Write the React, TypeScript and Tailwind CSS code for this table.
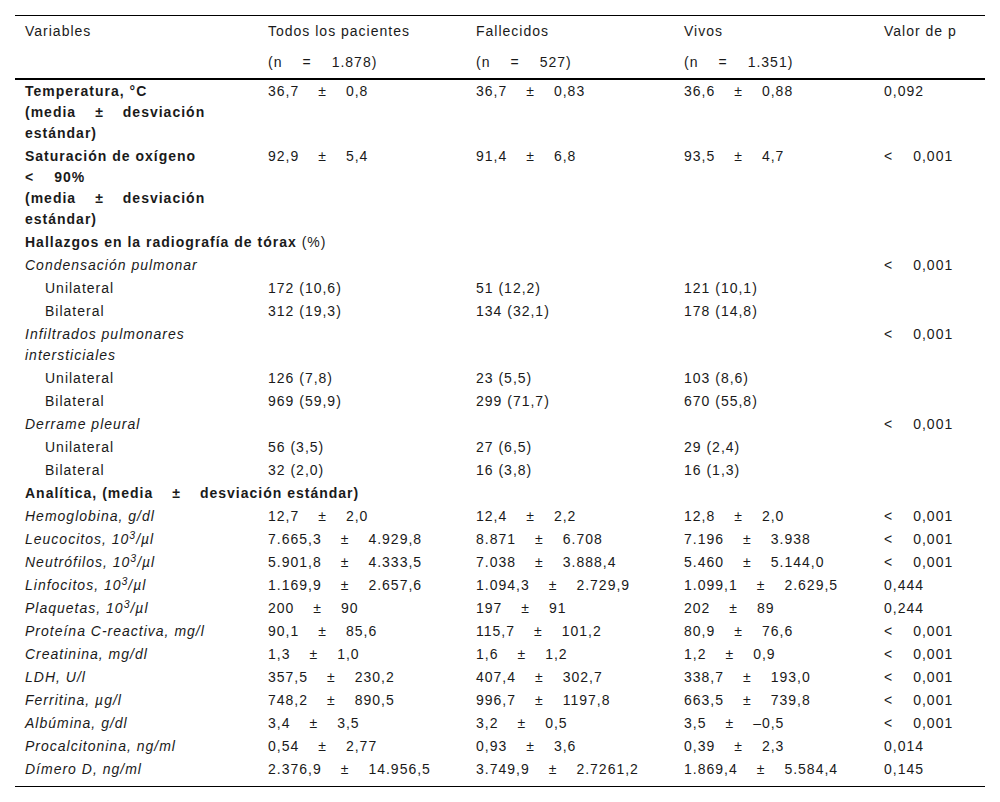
import React from "react";

const Op = ({ s }: { s: string }) => <span className="mx-[19px]">{s}</span>;
const pm = (a: string, b: string) => (
  <>
    {a}
    <Op s="±" />
    {b}
  </>
);
const lt = (v: string) => (
  <>
    <span className="mr-[20px]">&lt;</span>
    {v}
  </>
);
const sup = (name: string) => (
  <>
    {name}, 10<sup>3</sup>/µl
  </>
);

type Kind = "bold" | "italic" | "indent" | "section";
type Row = { kind: Kind; label: React.ReactNode; v?: React.ReactNode[] };

const rows: Row[] = [
  {
    kind: "bold",
    label: (
      <>
        Temperatura, °C
        <br />
        (media
        <Op s="±" />
        desviación estándar)
      </>
    ),
    v: [pm("36,7", "0,8"), pm("36,7", "0,83"), pm("36,6", "0,88"), "0,092"],
  },
  {
    kind: "bold",
    label: (
      <>
        Saturación de oxígeno
        <br />
        {lt("90%")}
        <br />
        (media
        <Op s="±" />
        desviación estándar)
      </>
    ),
    v: [pm("92,9", "5,4"), pm("91,4", "6,8"), pm("93,5", "4,7"), lt("0,001")],
  },
  {
    kind: "section",
    label: (
      <>
        <b>Hallazgos en la radiografía de tórax</b> (%)
      </>
    ),
  },
  { kind: "italic", label: "Condensación pulmonar", v: ["", "", "", lt("0,001")] },
  { kind: "indent", label: "Unilateral", v: ["172 (10,6)", "51 (12,2)", "121 (10,1)", ""] },
  { kind: "indent", label: "Bilateral", v: ["312 (19,3)", "134 (32,1)", "178 (14,8)", ""] },
  { kind: "italic", label: "Infiltrados pulmonares intersticiales", v: ["", "", "", lt("0,001")] },
  { kind: "indent", label: "Unilateral", v: ["126 (7,8)", "23 (5,5)", "103 (8,6)", ""] },
  { kind: "indent", label: "Bilateral", v: ["969 (59,9)", "299 (71,7)", "670 (55,8)", ""] },
  { kind: "italic", label: "Derrame pleural", v: ["", "", "", lt("0,001")] },
  { kind: "indent", label: "Unilateral", v: ["56 (3,5)", "27 (6,5)", "29 (2,4)", ""] },
  { kind: "indent", label: "Bilateral", v: ["32 (2,0)", "16 (3,8)", "16 (1,3)", ""] },
  {
    kind: "section",
    label: (
      <b>
        Analítica, (media
        <Op s="±" />
        desviación estándar)
      </b>
    ),
  },
  { kind: "italic", label: "Hemoglobina, g/dl", v: [pm("12,7", "2,0"), pm("12,4", "2,2"), pm("12,8", "2,0"), lt("0,001")] },
  { kind: "italic", label: sup("Leucocitos"), v: [pm("7.665,3", "4.929,8"), pm("8.871", "6.708"), pm("7.196", "3.938"), lt("0,001")] },
  { kind: "italic", label: sup("Neutrófilos"), v: [pm("5.901,8", "4.333,5"), pm("7.038", "3.888,4"), pm("5.460", "5.144,0"), lt("0,001")] },
  { kind: "italic", label: sup("Linfocitos"), v: [pm("1.169,9", "2.657,6"), pm("1.094,3", "2.729,9"), pm("1.099,1", "2.629,5"), "0,444"] },
  { kind: "italic", label: sup("Plaquetas"), v: [pm("200", "90"), pm("197", "91"), pm("202", "89"), "0,244"] },
  { kind: "italic", label: "Proteína C-reactiva, mg/l", v: [pm("90,1", "85,6"), pm("115,7", "101,2"), pm("80,9", "76,6"), lt("0,001")] },
  { kind: "italic", label: "Creatinina, mg/dl", v: [pm("1,3", "1,0"), pm("1,6", "1,2"), pm("1,2", "0,9"), lt("0,001")] },
  { kind: "italic", label: "LDH, U/l", v: [pm("357,5", "230,2"), pm("407,4", "302,7"), pm("338,7", "193,0"), lt("0,001")] },
  { kind: "italic", label: "Ferritina, µg/l", v: [pm("748,2", "890,5"), pm("996,7", "1197,8"), pm("663,5", "739,8"), lt("0,001")] },
  { kind: "italic", label: "Albúmina, g/dl", v: [pm("3,4", "3,5"), pm("3,2", "0,5"), pm("3,5", "–0,5"), lt("0,001")] },
  { kind: "italic", label: "Procalcitonina, ng/ml", v: [pm("0,54", "2,77"), pm("0,93", "3,6"), pm("0,39", "2,3"), "0,014"] },
  { kind: "italic", label: "Dímero D, ng/ml", v: [pm("2.376,9", "14.956,5"), pm("3.749,9", "2.7261,2"), pm("1.869,4", "5.584,4"), "0,145"] },
];

export default function App() {
  return (
    <div
      className="w-[1000px] h-[802px] bg-white pt-[15px] px-[15px] text-[14px] tracking-[1px] text-[#1a1a1a]"
      style={{ fontFamily: '"Liberation Sans", Arial, sans-serif' }}
    >
      <div className="border-t border-b border-black">
        <table className="w-full table-fixed border-separate border-spacing-0">
          <colgroup>
            <col className="w-[243px]" />
            <col className="w-[208px]" />
            <col className="w-[208px]" />
            <col className="w-[200px]" />
            <col className="w-[111px]" />
          </colgroup>
          <thead>
            <tr className="leading-[21px]">
              {["Variables", "Todos los pacientes", "Fallecidos", "Vivos", "Valor de p"].map((h) => (
                <th key={h} className="text-left font-normal align-top pl-[10px] pr-[4px] py-[5px] whitespace-nowrap">
                  {h}
                </th>
              ))}
            </tr>
            <tr className="leading-[21px]">
              {["", "1.878", "527", "1.351", null].map((n, i) => (
                <th
                  key={i}
                  className="text-left font-normal align-top pl-[10px] pr-[4px] py-[5px] border-b-2 border-black"
                >
                  {n ? (
                    <>
                      (n
                      <span className="mx-[20px]">=</span>
                      {n})
                    </>
                  ) : null}
                </th>
              ))}
            </tr>
          </thead>
          <tbody>
            {rows.map((r, idx) => {
              const last = idx === rows.length - 1;
              const py = last ? "pt-[1px] pb-[6px]" : "py-[1px]";
              if (r.kind === "section") {
                return (
                  <tr key={idx} className="leading-[21px]">
                    <td colSpan={5} className={`pl-[10px] pr-[10px] align-top whitespace-nowrap ${py}`}>
                      {r.label}
                    </td>
                  </tr>
                );
              }
              const labelCls =
                r.kind === "bold" ? "font-bold pl-[10px]" : r.kind === "italic" ? "italic pl-[10px]" : "pl-[30px]";
              return (
                <tr key={idx} className="leading-[21px]">
                  <td className={`align-top pr-[10px] ${labelCls} ${py}`}>{r.label}</td>
                  {r.v!.map((c, j) => (
                    <td key={j} className={`align-top pl-[10px] pr-[4px] whitespace-nowrap ${py}`}>
                      {c}
                    </td>
                  ))}
                </tr>
              );
            })}
          </tbody>
        </table>
      </div>
    </div>
  );
}
